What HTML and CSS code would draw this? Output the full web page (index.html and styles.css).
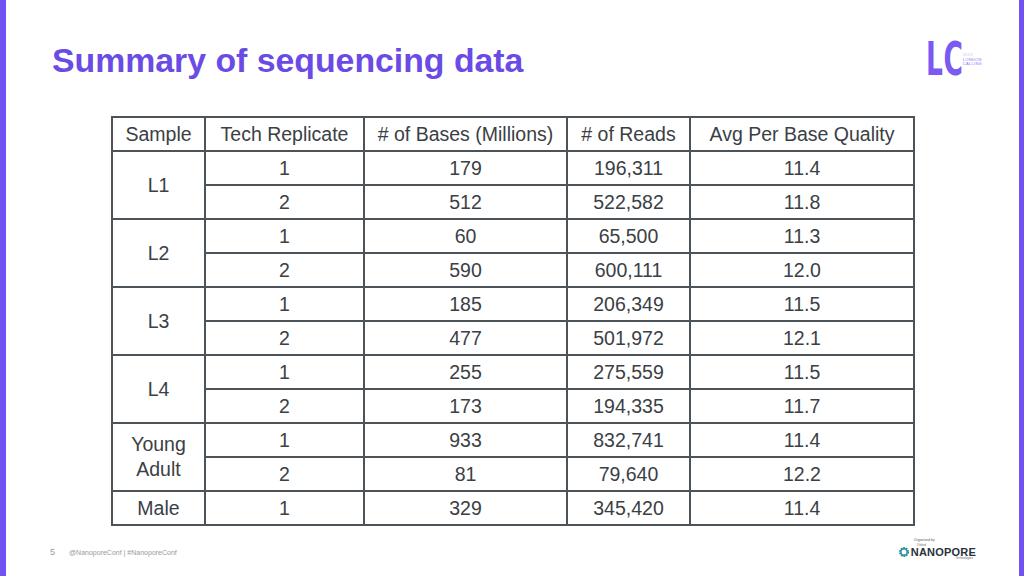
FILE: index.html
```html
<!DOCTYPE html>
<html>
<head>
<meta charset="utf-8">
<link rel="stylesheet" href="styles.css">
</head>
<body>
<div class="slide">
  <header class="top">
    <h1 class="title">Summary of sequencing data</h1>
    <div class="lc-logo">
      <span class="lc-mark">LC</span>
      <span class="lc-words"><span class="lc-year">2019</span><span>LONDON</span><span>CALLING</span></span>
    </div>
  </header>
  <main class="content">
    <table class="data">
      <colgroup>
        <col class="c1"><col class="c2"><col class="c3"><col class="c4"><col class="c5">
      </colgroup>
      <thead>
        <tr><th>Sample</th><th>Tech Replicate</th><th># of Bases (Millions)</th><th># of Reads</th><th>Avg Per Base Quality</th></tr>
      </thead>
      <tbody>
        <tr><td rowspan="2">L1</td><td>1</td><td>179</td><td>196,311</td><td>11.4</td></tr>
        <tr><td>2</td><td>512</td><td>522,582</td><td>11.8</td></tr>
        <tr><td rowspan="2">L2</td><td>1</td><td>60</td><td>65,500</td><td>11.3</td></tr>
        <tr><td>2</td><td>590</td><td>600,111</td><td>12.0</td></tr>
        <tr><td rowspan="2">L3</td><td>1</td><td>185</td><td>206,349</td><td>11.5</td></tr>
        <tr><td>2</td><td>477</td><td>501,972</td><td>12.1</td></tr>
        <tr><td rowspan="2">L4</td><td>1</td><td>255</td><td>275,559</td><td>11.5</td></tr>
        <tr><td>2</td><td>173</td><td>194,335</td><td>11.7</td></tr>
        <tr><td rowspan="2" class="multi">Young<br>Adult</td><td>1</td><td>933</td><td>832,741</td><td>11.4</td></tr>
        <tr><td>2</td><td>81</td><td>79,640</td><td>12.2</td></tr>
        <tr><td>Male</td><td>1</td><td>329</td><td>345,420</td><td>11.4</td></tr>
      </tbody>
    </table>
  </main>
  <footer class="bottom">
    <div class="foot-left">
      <span class="page-num">5</span>
      <span class="tags">@NanoporeConf | #NanoporeConf</span>
    </div>
    <div class="ont">
      <span class="ont-org">Organised by</span>
      <div class="ont-row">
        <svg class="ont-gear" width="12" height="12" viewBox="0 0 12 12">
          <circle cx="6" cy="6" r="3.9" fill="none" stroke="#2c8fa3" stroke-width="2.2" stroke-dasharray="1.6 0.85"/>
          <circle cx="6" cy="6" r="3.2" fill="none" stroke="#2c8fa3" stroke-width="1.4"/>
        </svg>
        <div class="ont-text">
          <span class="ont-small">Oxford</span>
          <span class="ont-name">NANOPORE</span>
          <span class="ont-small ont-tech">Technologies</span>
        </div>
      </div>
    </div>
  </footer>
</div>
</body>
</html>
```

FILE: styles.css
```css
html, body {
  margin: 0;
  padding: 0;
  background: #ffffff;
}

.slide {
  width: 1024px;
  height: 576px;
  box-sizing: border-box;
  border-left: 6px solid #7251f2;
  border-right: 5px solid #7251f2;
  display: flex;
  flex-direction: column;
  font-family: "Liberation Sans", Arial, sans-serif;
  overflow: hidden;
}

.top {
  display: flex;
  justify-content: space-between;
  align-items: flex-start;
  padding: 44px 0 0 46px;
  height: 72px;
  box-sizing: border-box;
}

.title {
  margin: 0;
  font-size: 33.8px;
  line-height: 33px;
  font-weight: bold;
  color: #6a4be6;
  letter-spacing: 0;
}

.lc-logo {
  display: flex;
  align-items: center;
  margin: -3px 37px 0 0;
  color: #7c5cf0;
}

.lc-mark {
  display: inline-block;
  width: 34px;
  white-space: nowrap;
  font-family: "Liberation Sans Narrow", "DejaVu Sans Condensed", sans-serif;
  font-size: 46px;
  line-height: 36px;
  font-weight: bold;
  transform: scaleX(0.64);
  transform-origin: left center;
  letter-spacing: 1px;
  color: #7a5af0;
}

.lc-words {
  display: flex;
  flex-direction: column;
  font-size: 4px;
  line-height: 4.5px;
  color: #8a72ee;
  letter-spacing: 0.3px;
  margin-top: 2px;
  margin-left: 3px;
}

.lc-year {
  color: #c9bdf7;
}

.content {
  padding: 44px 0 0 105px;
  height: 454px;
  box-sizing: border-box;
}

.data {
  border-collapse: collapse;
  table-layout: fixed;
  width: 804px;
  font-size: 19.5px;
  color: #3b4045;
}

.c1 { width: 93px; }
.c2 { width: 159px; }
.c3 { width: 203px; }
.c4 { width: 123px; }
.c5 { width: 224px; }

.data th,
.data td {
  border: 2px solid #4c545a;
  height: 34px;
  padding: 0;
  text-align: center;
  vertical-align: middle;
  font-weight: normal;
  line-height: 22px;
  box-sizing: border-box;
}

.data td.multi {
  line-height: 25px;
}

.bottom {
  display: flex;
  justify-content: space-between;
  align-items: flex-end;
  padding: 0 43px 16px 44px;
  flex: 1;
}

.foot-left {
  display: flex;
  align-items: baseline;
  gap: 14px;
  color: #9a9a9a;
  padding-bottom: 3px;
}

.page-num {
  font-size: 9px;
}

.tags {
  font-size: 7px;
}

.ont {
  display: flex;
  flex-direction: column;
  align-items: flex-start;
}

.ont-org {
  font-size: 3.5px;
  color: #555;
  margin-left: 16px;
  margin-bottom: 2px;
}

.ont-row {
  display: flex;
  align-items: center;
  gap: 1px;
}

.ont-text {
  display: flex;
  flex-direction: column;
}

.ont-small {
  font-size: 3px;
  line-height: 3px;
  color: #666;
  margin-left: 6px;
}

.ont-tech {
  align-self: flex-end;
  margin-right: 3px;
}

.ont-name {
  font-size: 11px;
  line-height: 10px;
  font-weight: bold;
  color: #28323c;
  letter-spacing: 0.2px;
}
```
